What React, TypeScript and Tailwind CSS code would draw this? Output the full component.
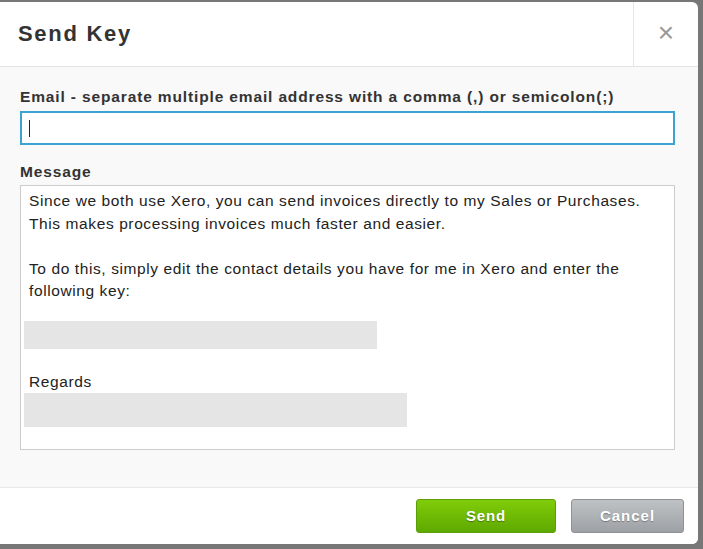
export default function App() {
  return (
    <div className="h-[549px] w-[703px] overflow-hidden bg-[#777] pt-[2px] pr-[5px] pb-[5px] font-['Liberation_Sans',Arial,sans-serif]">
      <div className="flex h-full flex-col overflow-hidden rounded-r-[6px] bg-white">
        <div className="flex h-[65px] shrink-0 items-stretch border-b border-[#e3e3e3]">
          <h1 className="flex flex-1 items-center pl-[18px] pb-[2px] text-[22px] font-bold tracking-[1.7px] text-[#333]">Send Key</h1>
          <button className="flex w-[65px] items-center justify-center border-l border-[#e6e6e6] pb-[2px] text-[28px] leading-none text-[#999]">
            ×
          </button>
        </div>

        <div className="flex-1 bg-[#f9f9f9] px-[20px] pt-[21px]">
          <label className="block text-[15.5px] leading-[18px] font-bold tracking-[0.86px] text-[#333]">
            Email - separate multiple email address with a comma (,) or semicolon(;)
          </label>
          <div className="mt-[5px] flex h-[34px] w-[655px] items-center border-2 border-[#3aa3d2] bg-white pl-[7px]">
            <span className="h-[17px] w-px bg-[#222]" />
          </div>

          <label className="mt-[18px] block text-[15.5px] leading-[18px] font-bold tracking-[0.86px] text-[#333]">Message</label>
          <div className="mt-[4px] h-[265px] w-[655px] border border-[#ccc] bg-white px-[3px] pt-[4px] text-[15.5px] leading-[22.5px] tracking-[0.6px] text-[#222]">
            <p className="pl-[5px]">Since we both use Xero, you can send invoices directly to my Sales or Purchases.</p>
            <p className="pl-[5px]">This makes processing invoices much faster and easier.</p>
            <p className="pl-[5px]">&nbsp;</p>
            <p className="pl-[5px]">To do this, simply edit the contact details you have for me in Xero and enter the</p>
            <p className="pl-[5px]">following key:</p>
            <div className="mt-[18px] h-[28px] w-[353px] bg-[#e5e5e5]" />
            <p className="mt-[22px] pl-[5px]">Regards</p>
            <div className="h-[34px] w-[383px] bg-[#e5e5e5]" />
          </div>
        </div>

        <div className="flex h-[57px] shrink-0 justify-end gap-[15px] border-t border-[#e8e8e8] bg-white pt-[11px] pr-[14px]">
          <button className="h-[34px] w-[140px] rounded-[3px] border border-[#5a9e0a] bg-gradient-to-b from-[#80cc0a] to-[#5ea900] text-[15px] font-bold tracking-[0.8px] text-white [text-shadow:0_1px_1px_rgba(0,0,0,0.35)]">
            Send
          </button>
          <button className="h-[34px] w-[113px] rounded-[3px] border border-[#8e9296] bg-gradient-to-b from-[#bfc2c5] to-[#9da1a5] text-[15px] font-bold tracking-[1px] text-white [text-shadow:0_1px_1px_rgba(0,0,0,0.3)]">
            Cancel
          </button>
        </div>
      </div>
    </div>
  )
}
